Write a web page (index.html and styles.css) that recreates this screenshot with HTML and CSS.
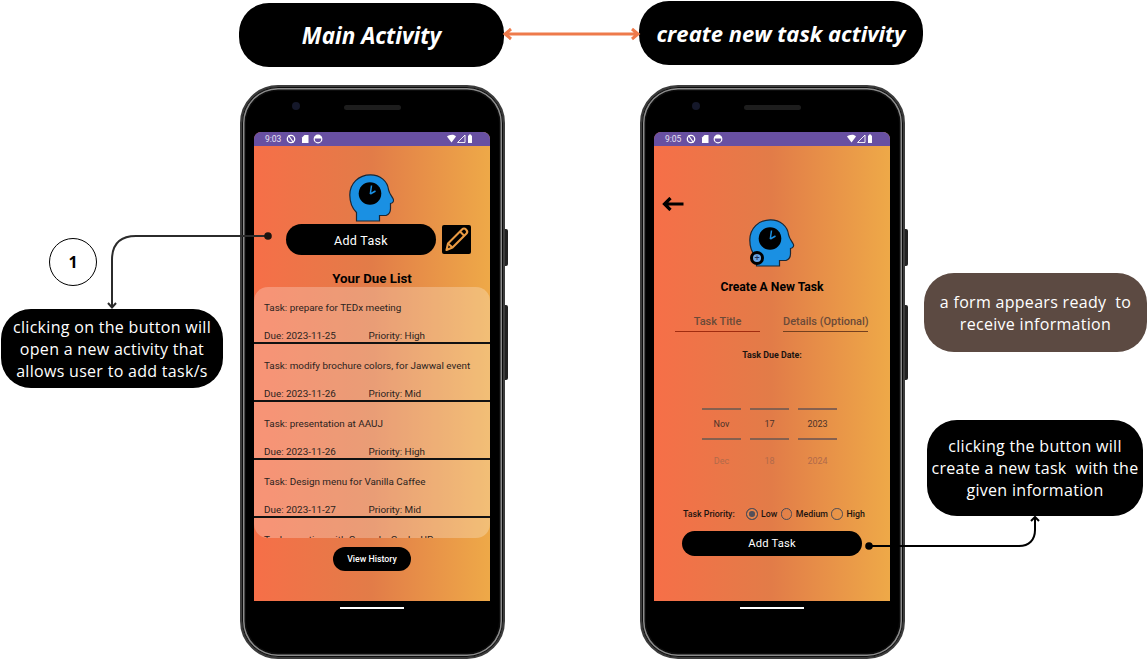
FILE: index.html
```html
<!DOCTYPE html>
<html lang="en">
<head>
  <meta charset="UTF-8" />
  <title>Task App Activities</title>
  <link rel="stylesheet" href="styles.css">
</head>
<body>
  <svg width="0" height="0" class="defs">
    <symbol id="head" viewBox="0 0 46 48">
      <path d="M7.5 47V38.5C3 34 .8 28 .8 21 .8 9.5 9.5 .8 21.5 .8 31.5 .8 38.5 7.5 39.5 15.5 40 18.5 41.5 20.5 44 24.5 45.5 27 44 29 41.500 29.500V34.500C41.500 38 40 40.500 37 41.500H30.500V47Z" fill="#1a90e3" stroke="#1d2733" stroke-width="1.200"/>
      <circle cx="21" cy="19.500" r="11.300" fill="#000"/>
      <path d="M21.300 20 22.500 11.500M21.300 20 26.500 17" stroke="#1a90e3" stroke-width="1.500" fill="none"/>
    </symbol>
    <symbol id="st-left" viewBox="0 0 56 12">
      <circle cx="6" cy="6" r="3.700" fill="none" stroke="#fff" stroke-width="1.300"/>
      <path d="M3.500 2.500 8.500 9.500" stroke="#fff" stroke-width="1.200"/>
      <path d="M17 10V4.500L19.500 2H23.500V10Z" fill="#fff"/>
      <circle cx="33" cy="6" r="3.800" fill="none" stroke="#fff" stroke-width="1.200"/>
      <path d="M29.500 5.500H36.500V3.500L33 2 29.500 3.500Z" fill="#fff"/>
    </symbol>
    <symbol id="st-right" viewBox="0 0 26 10">
      <path d="M0 2.500C2 .8 7 -.2 9 2.500L4.500 8.500Z" fill="#fff"/>
      <path d="M18 1V8.500H10.500Z" fill="none" stroke="#fff" stroke-width=".9"/>
      <path d="M21 1.500H22V.5H24V1.500H25V9H21Z" fill="#fff"/>
    </symbol>
  </svg>

  <div class="title-pill main-title">Main Activity</div>
  <div class="title-pill new-title">create new task activity</div>

  <!-- main activity -->
  <div class="phone phone-main">
    <span class="camera"></span>
    <span class="speaker"></span>
    <span class="side-btn power"></span>
    <span class="side-btn volume"></span>
    <div class="screen">
      <div class="status-bar">
        <span class="clock">9:03</span>
        <svg class="st-left"><use href="#st-left"/></svg>
        <svg class="st-right"><use href="#st-right"/></svg>
      </div>
      <svg class="logo"><use href="#head"/></svg>
      <div class="add-row">
        <div class="btn add-main">Add Task</div>
        <div class="pencil">
          <svg width="29" height="29" viewBox="0 0 29 29" fill="none" stroke="#ea9a42" stroke-width="2.100" stroke-linejoin="round">
            <path d="M4.500 25 6 18.500 20 4.500C21.500 3 23 3.500 24 4.500S26 7 24.500 8.500L10.500 22.500Z"/>
            <path d="M18 6.500 22.500 11M6 18.500 10.500 22.500"/>
          </svg>
        </div>
      </div>
      <div class="due-title">Your Due List</div>
      <div class="task-list">
        <div class="task">
          <div class="task-name">Task: prepare for TEDx meeting</div>
          <div class="task-meta"><span class="due">Due: 2023-11-25</span><span>Priority: High</span></div>
        </div>
        <div class="task">
          <div class="task-name">Task: modify brochure colors, for Jawwal event</div>
          <div class="task-meta"><span class="due">Due: 2023-11-26</span><span>Priority: Mid</span></div>
        </div>
        <div class="task">
          <div class="task-name">Task: presentation at AAUJ</div>
          <div class="task-meta"><span class="due">Due: 2023-11-26</span><span>Priority: High</span></div>
        </div>
        <div class="task">
          <div class="task-name">Task: Design menu for Vanilla Caffee</div>
          <div class="task-meta"><span class="due">Due: 2023-11-27</span><span>Priority: Mid</span></div>
        </div>
        <div class="task">
          <div class="task-name">Task: meeting with Gaza sky Geeks UP</div>
        </div>
      </div>
      <div class="btn history">View History</div>
    </div>
    <span class="home-bar"></span>
  </div>

  <!-- create new task activity -->
  <div class="phone phone-new">
    <span class="camera"></span>
    <span class="speaker"></span>
    <span class="side-btn power"></span>
    <span class="side-btn volume"></span>
    <div class="screen">
      <div class="status-bar">
        <span class="clock">9:05</span>
        <svg class="st-left"><use href="#st-left"/></svg>
        <svg class="st-right"><use href="#st-right"/></svg>
      </div>
      <svg class="back" width="22" height="14" viewBox="0 0 22 14" fill="none" stroke="#000" stroke-width="3.200">
        <path d="M21.500 7H3M8.500 1 2.500 7 8.500 13"/>
      </svg>
      <div class="logo-wrap">
        <svg class="logo"><use href="#head"/></svg>
        <span class="plus-badge">+</span>
      </div>
      <div class="create-title">Create A New Task</div>
      <div class="fields">
        <div class="field focused">Task Title</div>
        <div class="field">Details (Optional)</div>
      </div>
      <div class="date-label">Task Due Date:</div>
      <div class="picker">
        <div class="picker-col"><div class="picked">Nov</div><div class="next">Dec</div></div>
        <div class="picker-col"><div class="picked">17</div><div class="next">18</div></div>
        <div class="picker-col"><div class="picked">2023</div><div class="next">2024</div></div>
      </div>
      <div class="priority">
        <span class="priority-label">Task Priority:</span>
        <span class="radio checked"></span><span class="radio-text">Low</span>
        <span class="radio"></span><span class="radio-text">Medium</span>
        <span class="radio"></span><span class="radio-text">High</span>
      </div>
      <div class="btn add-new">Add Task</div>
    </div>
    <span class="home-bar"></span>
  </div>

  <div class="step-circle">1</div>
  <div class="callout call-open">clicking on the button will<br>open a new activity that<br>allows user to add task/s</div>
  <div class="callout call-form">a form appears ready&nbsp; to<br>receive information</div>
  <div class="callout call-create">clicking the button will<br>create a new task&nbsp; with the<br>given information</div>

  <svg class="connectors" width="1148" height="660" viewBox="0 0 1148 660" fill="none">
    <path d="M506 34H638M511 29 505 34 511 39M632 29 638 34 632 39" stroke="#ee7a4b" stroke-width="3"/>
    <path d="M268 236H136C120 236 112 244 112 260V307M108 303 112 307.500 116 303" stroke="#2b2b2b" stroke-width="2"/>
    <circle cx="268" cy="236" r="3.800" fill="#1c1410"/>
    <path d="M869 546H1019C1029 546 1035 540 1035 530V518M1031 521 1035 517 1039 521" stroke="#000" stroke-width="2"/>
    <circle cx="869" cy="546" r="3.800" fill="#000"/>
  </svg>
</body>
</html>
```

FILE: styles.css
```css
body {
  margin: 0;
  width: 1148px;
  height: 660px;
  position: relative;
  overflow: hidden;
  background: #fff;
  font-family: Roboto, sans-serif;
}
.defs { position: absolute; }

/* diagram pieces */
.title-pill {
  position: absolute;
  display: flex;
  align-items: center;
  justify-content: center;
  background: #000;
  color: #fff;
  border-radius: 30px;
  font-family: "Open Sans", sans-serif;
  font-style: italic;
  font-weight: 700;
}
.main-title { left: 239px; top: 3px; width: 265px; height: 64px; font-size: 22.500px; }
.new-title { left: 639px; top: 1px; width: 284px; height: 64px; font-size: 22px; }

.callout {
  position: absolute;
  display: flex;
  align-items: center;
  justify-content: center;
  text-align: center;
  background: #000;
  color: #fff;
  font-family: "Open Sans", sans-serif;
  font-size: 16px;
  letter-spacing: .3px;
  line-height: 22px;
  border-radius: 30px;
}
.call-open { left: 1px; top: 309px; width: 222px; height: 79px; }
.call-form { left: 924px; top: 273px; width: 223px; height: 79px; background: #5c4a42; }
.call-create { left: 927px; top: 420px; width: 216px; height: 96px; }

.step-circle {
  position: absolute;
  left: 49px;
  top: 238px;
  width: 46px;
  height: 46px;
  border: 1px solid #000;
  border-radius: 50%;
  display: flex;
  align-items: center;
  justify-content: center;
  font-family: "Open Sans", sans-serif;
  font-weight: 700;
  font-size: 16px;
}
.connectors { position: absolute; left: 0; top: 0; }

/* phone shell */
.phone {
  position: absolute;
  top: 85px;
  width: 265px;
  height: 574px;
  box-sizing: border-box;
  padding: 45px 13px 0 12px;
  background: #000;
  border-radius: 38px;
  border: 2px solid #3c3c3c;
  box-shadow: inset 0 0 0 1px #0c0c0c, inset 0 0 0 2.500px #8c8c8c, inset 0 0 0 4px #0c0c0c;
}
.phone-main { left: 240px; }
.phone-new { left: 640px; }
.camera {
  position: absolute;
  left: 50px;
  top: 15px;
  width: 8px;
  height: 8px;
  border-radius: 50%;
  background: #15182a;
}
.speaker {
  position: absolute;
  left: 102px;
  top: 18px;
  width: 57px;
  height: 5px;
  border-radius: 3px;
  background: #1d1d1d;
}
.side-btn {
  position: absolute;
  left: 263px;
  width: 3px;
  background: #222;
  border-radius: 0 2px 2px 0;
}
.power { top: 142px; height: 37px; }
.volume { top: 218px; height: 75px; }
.home-bar {
  display: block;
  width: 64px;
  height: 2px;
  margin: 6px 0 0 86px;
  background: #fff;
}

/* screen */
.screen {
  width: 236px;
  height: 469px;
  display: flex;
  flex-direction: column;
  color: #000;
  border-radius: 7px 7px 0 0;
  overflow: hidden;
  background: linear-gradient(90deg, #f66f48 0%, #e27c48 50%, #eea948 100%);
}
.status-bar {
  height: 14px;
  flex: none;
  display: flex;
  align-items: center;
  background: #6850a2;
  color: #e8e4f2;
  font-size: 8.5px;
  padding-left: 11px;
}
.clock { width: 21px; }
.st-left { width: 56px; height: 12px; margin-left: -1px; }
.st-right { width: 26px; height: 10px; margin-left: 106px; }
.logo { width: 46px; height: 48px; display: block; flex: none; }
.phone-main .logo { margin: 28px 0 0 95px; }

.btn {
  background: #000;
  color: #fff;
  display: flex;
  align-items: center;
  justify-content: center;
  border-radius: 16px;
  flex: none;
}
.add-row {
  display: flex;
  align-items: center;
  gap: 6px;
  margin-top: 2px;
  padding-left: 32px;
}
.add-main { width: 150px; height: 31px; font-size: 12.500px; letter-spacing: .3px; padding-top: 1px; box-sizing: border-box; }
.pencil { width: 29px; height: 29px; background: #000; border-radius: 2px; }
.due-title {
  margin-top: 16px;
  text-align: center;
  font-size: 13.300px;
  font-weight: 700;
  line-height: 16px;
}
.task-list {
  height: 251px;
  flex: none;
  overflow: hidden;
  border-radius: 14px;
  background: rgba(255, 255, 255, .25);
}
.task {
  height: 40px;
  border-bottom: 2px solid #111;
  padding: 16px 10px 0;
  font-size: 9.900px;
  line-height: 12px;
  color: #2c2320;
}
.task:first-child { padding-top: 15px; }
.task-meta { display: flex; margin-top: 16px; }
.due { width: 104.500px; }
.history {
  width: 78px;
  height: 24px;
  margin: 9px 0 0 79px;
  font-size: 8.800px;
  font-weight: 500;
}

/* create task form */
.back { margin: 51px 0 0 8px; flex: none; }
.phone-new .logo-wrap {
  position: relative;
  width: 46px;
  height: 48px;
  margin: 8px 0 0 95px;
  flex: none;
}
.plus-badge {
  position: absolute;
  left: 1px;
  top: 32px;
  width: 8px;
  height: 8px;
  border: 3.500px solid #000;
  border-radius: 50%;
  background: #6ba4e4;
  color: #1c2f55;
  font-size: 9px;
  line-height: 8px;
  text-align: center;
}
.create-title {
  margin-top: 13px;
  text-align: center;
  font-size: 12.200px;
  font-weight: 700;
  line-height: 14px;
}
.fields {
  display: flex;
  gap: 23px;
  margin-top: 20px;
  padding-left: 21px;
}
.field {
  width: 85px;
  height: 17px;
  line-height: 15px;
  font-size: 11px;
  font-weight: 500;
  white-space: nowrap;
  color: #6b4a38;
  border-bottom: 1px solid #74401f;
}
.field.focused { text-align: center; border-bottom-color: #a02c10; }
.date-label {
  margin-top: 17px;
  text-align: center;
  font-size: 8.900px;
  font-weight: 700;
  line-height: 12px;
  color: #1c1410;
}
.picker {
  display: flex;
  gap: 9px;
  margin-top: 47px;
  padding-left: 48px;
}
.picker-col { width: 39px; text-align: center; font-size: 9px; color: #4a3228; }
.picked {
  height: 28px;
  line-height: 29px;
  border-top: 2px solid #86604f;
  border-bottom: 2px solid #86604f;
}
.next { height: 42px; line-height: 43px; color: #b26a4a; }
.priority {
  display: flex;
  align-items: center;
  height: 14px;
  margin-top: 25px;
  padding-left: 29px;
  font-size: 8.800px;
  font-weight: 500;
  color: #1c1410;
}
.priority-label { width: 63px; }
.radio {
  width: 9.500px;
  height: 9.500px;
  border: 1.200px solid #4a4a55;
  border-radius: 50%;
  flex: none;
}
.radio.checked { background: #55505a; box-shadow: inset 0 0 0 2px #e9844a; }
.radio-text { margin: 0 3.500px; }
.add-new {
  width: 180px;
  height: 25px;
  margin: 10px 0 0 28px;
  font-size: 11.200px;
  letter-spacing: .2px;
  border-radius: 13px;
}
```
